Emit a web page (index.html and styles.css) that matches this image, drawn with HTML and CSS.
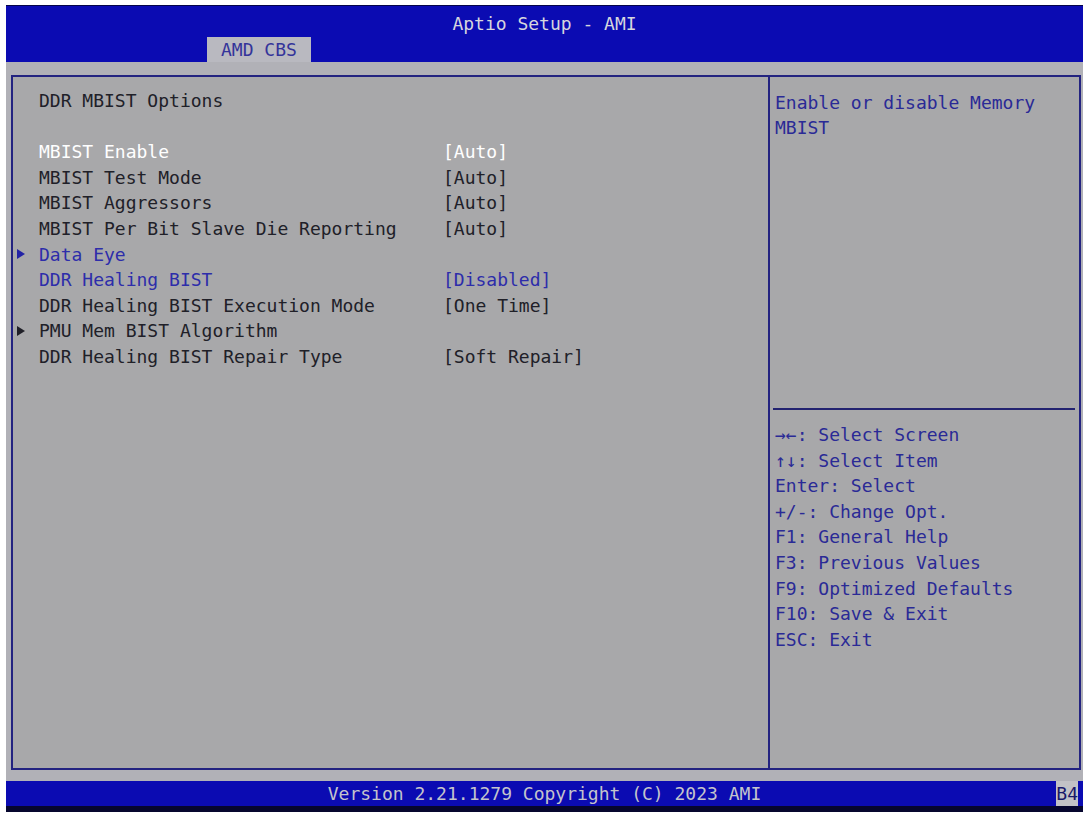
FILE: index.html
```html
<!DOCTYPE html>
<html lang="en">
<head>
    <meta charset="UTF-8">
    <meta name="viewport" content="width=device-width, initial-scale=1.0">
    <title>Aptio Setup - AMI</title>
    <link rel="stylesheet" href="styles.css">
</head>
<body>
    <div class="screen">
        <header class="topbar">
            <div class="title">Aptio Setup - AMI</div>
            <div class="tabs">
                <span class="tab">AMD CBS</span>
            </div>
        </header>

        <div class="main">
            <div class="panel">
                <section class="settings">
                    <div class="row"><span class="mark"></span><span class="label">DDR MBIST Options</span></div>
                    <div class="row"></div>
                    <div class="row selected"><span class="mark"></span><span class="label">MBIST Enable</span><span class="value">[Auto]</span></div>
                    <div class="row"><span class="mark"></span><span class="label">MBIST Test Mode</span><span class="value">[Auto]</span></div>
                    <div class="row"><span class="mark"></span><span class="label">MBIST Aggressors</span><span class="value">[Auto]</span></div>
                    <div class="row"><span class="mark"></span><span class="label">MBIST Per Bit Slave Die Reporting</span><span class="value">[Auto]</span></div>
                    <div class="row link"><span class="mark"><i class="arrow"></i></span><span class="label">Data Eye</span></div>
                    <div class="row link"><span class="mark"></span><span class="label">DDR Healing BIST</span><span class="value">[Disabled]</span></div>
                    <div class="row"><span class="mark"></span><span class="label">DDR Healing BIST Execution Mode</span><span class="value">[One Time]</span></div>
                    <div class="row"><span class="mark"><i class="arrow"></i></span><span class="label">PMU Mem BIST Algorithm</span></div>
                    <div class="row"><span class="mark"></span><span class="label">DDR Healing BIST Repair Type</span><span class="value">[Soft Repair]</span></div>
                </section>

                <aside class="help">
                    <div class="help-desc">Enable or disable Memory<br>MBIST</div>
                    <div class="sep"></div>
                    <div class="keys">
                        <div>&rarr;&larr;: Select Screen</div>
                        <div>&uarr;&darr;: Select Item</div>
                        <div>Enter: Select</div>
                        <div>+/-: Change Opt.</div>
                        <div>F1: General Help</div>
                        <div>F3: Previous Values</div>
                        <div>F9: Optimized Defaults</div>
                        <div>F10: Save &amp; Exit</div>
                        <div>ESC: Exit</div>
                    </div>
                </aside>
            </div>
        </div>

        <footer class="statusbar">
            <span></span>
            <span class="version">Version 2.21.1279 Copyright (C) 2023 AMI</span>
            <span class="code">B4</span>
        </footer>
    </div>
</body>
</html>
```

FILE: styles.css
```css
body {
    margin: 0;
    padding: 0;
    background-color: #fff;
    font-family: 'DejaVu Sans Mono', 'Liberation Mono', monospace;
    font-size: 18px;
}
.screen {
    width: 1077px;
    margin: 5px 0 0 6px;
    display: flex;
    flex-direction: column;
}
.topbar {
    background-color: #0b0bb2;
    border-top: 1px solid #05054a;
    padding-top: 5px;
    display: flex;
    flex-direction: column;
}
.title {
    height: 26px;
    line-height: 26px;
    text-align: center;
    color: #d6d6de;
}
.tabs {
    display: flex;
    padding-left: 201px;
}
.tab {
    height: 25px;
    line-height: 25px;
    padding: 0 14px;
    background-color: #b9b9c0;
    color: #34349a;
}
.main {
    background-color: #b1b1b7;
    padding: 13px 2px 11px 5px;
}
.panel {
    display: flex;
    height: 691px;
    border: 2px solid #232380;
    background-color: #a8a8aa;
}
.settings {
    width: 755px;
    padding-top: 11px;
    border-right: 2px solid #232380;
    color: #202028;
}
.row {
    display: grid;
    grid-template-columns: 26px 404px auto;
    height: 25.6px;
    line-height: 25.6px;
    white-space: nowrap;
}
.mark {
    display: flex;
    align-items: center;
    padding-left: 4px;
}
.arrow {
    display: block;
    width: 0;
    height: 0;
    border-left: 8px solid #202028;
    border-top: 5px solid transparent;
    border-bottom: 5px solid transparent;
}
.row.selected {
    color: #ffffff;
}
.row.link {
    color: #2d2daa;
}
.row.link .arrow {
    border-left-color: #2222a6;
}
.help {
    flex: 1;
    display: flex;
    flex-direction: column;
    color: #2a2a96;
}
.help-desc {
    height: 331px;
    box-sizing: border-box;
    padding: 13px 4px 0 5px;
    line-height: 25px;
}
.sep {
    height: 2px;
    margin: 0 4px 0 3px;
    background-color: #232370;
}
.keys {
    padding: 12px 4px 0 5px;
    line-height: 25.6px;
    white-space: nowrap;
}
.statusbar {
    display: grid;
    grid-template-columns: 1fr auto 1fr;
    height: 25px;
    line-height: 25px;
    background-color: #0b0bb2;
    border-bottom: 6px solid #06062e;
    color: #c4c4cc;
}
.code {
    justify-self: end;
    margin-right: 5px;
    padding: 0 0;
    background-color: #c2c2c6;
    color: #18186a;
}
```
